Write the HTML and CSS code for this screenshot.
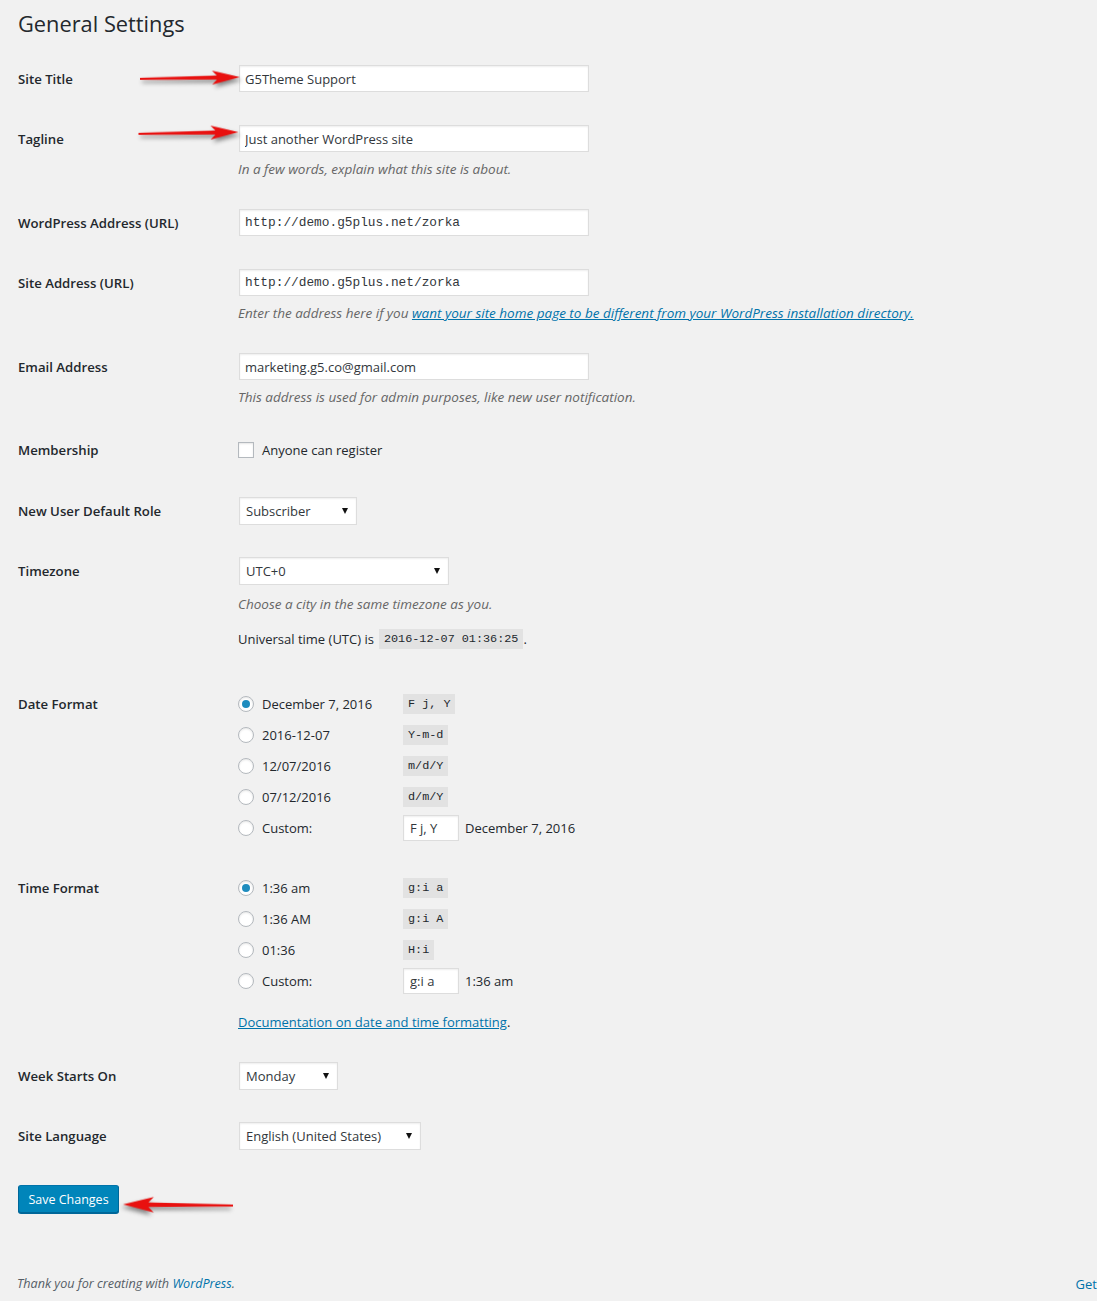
FILE: index.html
```html
<!DOCTYPE html>
<html>
<head lang="en">
<meta charset="UTF-8">
<title>General Settings</title>
<link rel="stylesheet" href="styles.css">
</head>
<body>
  <div class="wrap">
    <h1>General Settings</h1>

    <form method="post" action="options.php">
      <table class="form-table">
        <tr>
          <th>Site Title</th>
          <td><input type="text" class="regular-text" value="G5Theme Support"></td>
        </tr>
        <tr>
          <th>Tagline</th>
          <td>
            <input type="text" class="regular-text" value="Just another WordPress site">
            <p class="description">In a few words, explain what this site is about.</p>
          </td>
        </tr>
        <tr>
          <th>WordPress Address (URL)</th>
          <td><input type="text" class="regular-text code" value="http://demo.g5plus.net/zorka"></td>
        </tr>
        <tr>
          <th>Site Address (URL)</th>
          <td>
            <input type="text" class="regular-text code" value="http://demo.g5plus.net/zorka">
            <p class="description">Enter the address here if you <a href="#">want your site home page to be different from your WordPress installation directory.</a></p>
          </td>
        </tr>
        <tr>
          <th>Email Address</th>
          <td>
            <input type="text" class="regular-text" value="marketing.g5.co@gmail.com">
            <p class="description">This address is used for admin purposes, like new user notification.</p>
          </td>
        </tr>
        <tr class="membership">
          <th>Membership</th>
          <td>
            <label class="check-line"><input type="checkbox"> Anyone can register</label>
          </td>
        </tr>
        <tr>
          <th>New User Default Role</th>
          <td>
            <span class="select-wrap"><select class="sel-role"><option>Subscriber</option></select></span>
          </td>
        </tr>
        <tr>
          <th>Timezone</th>
          <td>
            <span class="select-wrap"><select class="sel-tz"><option>UTC+0</option></select></span>
            <p class="description">Choose a city in the same timezone as you.</p>
            <p class="utc">Universal time (<abbr>UTC</abbr>) is <code>2016-12-07 01:36:25</code>.</p>
          </td>
        </tr>
        <tr>
          <th>Date Format</th>
          <td>
            <fieldset>
              <label class="fmt"><input type="radio" name="date_format" checked><span class="date-time-text">December 7, 2016</span><code>F j, Y</code></label>
              <label class="fmt"><input type="radio" name="date_format"><span class="date-time-text">2016-12-07</span><code>Y-m-d</code></label>
              <label class="fmt"><input type="radio" name="date_format"><span class="date-time-text">12/07/2016</span><code>m/d/Y</code></label>
              <label class="fmt"><input type="radio" name="date_format"><span class="date-time-text">07/12/2016</span><code>d/m/Y</code></label>
              <label class="fmt"><input type="radio" name="date_format"><span class="date-time-text">Custom:</span><input type="text" class="small-text" value="F j, Y"><span class="example">December 7, 2016</span></label>
            </fieldset>
          </td>
        </tr>
        <tr>
          <th>Time Format</th>
          <td>
            <fieldset>
              <label class="fmt"><input type="radio" name="time_format" checked><span class="date-time-text">1:36 am</span><code>g:i a</code></label>
              <label class="fmt"><input type="radio" name="time_format"><span class="date-time-text">1:36 AM</span><code>g:i A</code></label>
              <label class="fmt"><input type="radio" name="time_format"><span class="date-time-text">01:36</span><code>H:i</code></label>
              <label class="fmt"><input type="radio" name="time_format"><span class="date-time-text">Custom:</span><input type="text" class="small-text" value="g:i a"><span class="example">1:36 am</span></label>
              <p class="doc"><a href="#">Documentation on date and time formatting</a>.</p>
            </fieldset>
          </td>
        </tr>
        <tr>
          <th>Week Starts On</th>
          <td>
            <span class="select-wrap"><select class="sel-week"><option>Monday</option></select></span>
          </td>
        </tr>
        <tr>
          <th>Site Language</th>
          <td>
            <span class="select-wrap"><select class="sel-lang"><option>English (United States)</option></select></span>
          </td>
        </tr>
      </table>

      <p class="submit"><input type="submit" class="button-primary" value="Save Changes"></p>
    </form>
  </div>

  <div id="wpfooter">
    <span class="thanks">Thank you for creating with <a href="#">WordPress</a>.</span>
    <span class="version"><a href="#">Get</a></span>
  </div>

  <!-- annotation arrows -->
  <svg class="arrow arrow-title" viewBox="0 0 100 20"><path d="M0,9 L77,8 L72,3 L100,10 L72,17 L77,12 L0,11 Z"/></svg>
  <svg class="arrow arrow-tagline" viewBox="0 0 100 20"><path d="M0,9 L77,8 L72,3 L100,10 L72,17 L77,12 L0,11 Z"/></svg>
  <svg class="arrow arrow-save" viewBox="0 0 100 20"><path d="M0,9 L77,8 L72,3 L100,10 L72,17 L77,12 L0,11 Z"/></svg>
</body>
</html>
```

FILE: styles.css
```css
html { overflow-x: hidden; }
body {
margin: 0;
background: #f1f1f1;
color: #23282d;
font-family: "Open Sans", sans-serif;
font-size: 13px;
line-height: 1.4em;
position: relative;
min-height: 1301px;
}
a { color: #0073aa; }
.wrap { padding-left: 18px; }
h1 {
margin: 0;
padding: 9px 15px 4px 0;
font-size: 21.8px;
font-weight: 400;
line-height: 29px;
}
.form-table {
border-collapse: collapse;
margin-top: 8px;
}
.form-table th {
width: 200px;
padding: 20px 10px 20px 0;
text-align: left;
vertical-align: top;
font-weight: 600;
font-size: 13.2px;
line-height: 1.4;
}
.form-table td {
padding: 15px 10px;
vertical-align: top;
line-height: 1.4;
}
.form-table .membership th { padding-top: 19px; }
.form-table .membership td { padding-top: 16px; }
input[type=text], select {
font-family: "Open Sans", sans-serif;
font-size: 13px;
color: #32373c;
background: #fff;
border: 1px solid #ddd;
box-shadow: inset 0 1px 2px rgba(0,0,0,.07);
box-sizing: border-box;
outline: none;
}
input[type=text] {
height: 27px;
margin: 0 1px 3px 1px;
padding: 0 5px;
display: block;
}
input.regular-text { width: 350px; }
input.code { font-family: "Liberation Mono", monospace; font-size: 12.8px; }
.description {
margin: 7px 0 0;
font-size: 13.5px;
font-style: italic;
line-height: 20px;
color: #666;
}
.select-wrap {
position: relative;
display: inline-block;
margin: 0 1px 2px;
}
.select-wrap::after {
content: "";
position: absolute;
right: 9px;
top: 11px;
border-left: 3.5px solid transparent;
border-right: 3.5px solid transparent;
border-top: 6px solid #111;
pointer-events: none;
}
select {
-webkit-appearance: none;
appearance: none;
display: block;
height: 28px;
padding: 0 20px 0 6px;
border-radius: 0;
}
.sel-role { width: 118px; }
.sel-tz { width: 210px; }
.sel-week { width: 99px; }
.sel-lang { width: 182px; }
.utc {
margin: 15px 0 11px;
display: flex;
align-items: center;
height: 20px;
}
.utc code { margin-left: 5px; }
code {
font-family: "Liberation Mono", monospace;
font-size: 11.8px;
background: #e2e2e2;
padding: 2px 5px 1px;
line-height: 17px;
}
fieldset { border: 0; margin: 0; padding: 0; }
.check-line {
display: flex;
align-items: center;
height: 24px;
margin-bottom: 5px;
}
input[type=checkbox], input[type=radio] {
-webkit-appearance: none;
appearance: none;
width: 16px;
height: 16px;
margin: 0 8px 0 0;
border: 1px solid #b4b9be;
background: #fff;
box-shadow: inset 0 1px 2px rgba(0,0,0,.1);
box-sizing: border-box;
flex: none;
position: relative;
}
input[type=radio] { border-radius: 50%; }
input[type=radio]:checked::before {
content: "";
position: absolute;
left: 3px;
top: 3px;
width: 8px;
height: 8px;
border-radius: 50%;
background: #1e8cbe;
}
.fmt {
display: flex;
align-items: center;
height: 28px;
margin-bottom: 3px;
}
.fmt:last-child { margin-bottom: 2px; }
.date-time-text {
display: inline-block;
width: 141px;
}
input.small-text {
width: 56px;
height: 26px;
margin: 0;
padding: 0 6px;
}
.example { margin-left: 6px; }
.doc { margin: 17px 0 0; line-height: 20px; }
.submit { margin: 0; padding-top: 18px; }
.button-primary {
font-family: "Open Sans", sans-serif;
font-size: 12.5px;
color: #fff;
background: #0085ba;
border: 1px solid;
border-color: #0073aa #006799 #006799;
border-radius: 3px;
box-shadow: 0 1px 0 #006799;
height: 28px;
width: 101px;
padding: 0 8px;
cursor: pointer;
}
#wpfooter {
display: flex;
justify-content: space-between;
margin-top: 62px;
padding-left: 17px;
font-size: 12.6px;
font-style: italic;
color: #555d66;
}
#wpfooter a { text-decoration: none; }
.version { font-style: normal; font-size: 13px; }
.arrow {
position: absolute;
fill: #e8100f;
filter: drop-shadow(2px 3px 2px rgba(0,0,0,.45));
overflow: visible;
}
.arrow-title { left: 140px; top: 68px; width: 100px; height: 20px; transform: rotate(-1deg); }
.arrow-tagline { left: 137px; top: 123px; width: 103px; height: 20px; transform: rotate(-1deg); }
.arrow-save { left: 121px; top: 1194px; width: 114px; height: 22px; transform: scaleX(-1) rotate(-0.6deg); }
```
